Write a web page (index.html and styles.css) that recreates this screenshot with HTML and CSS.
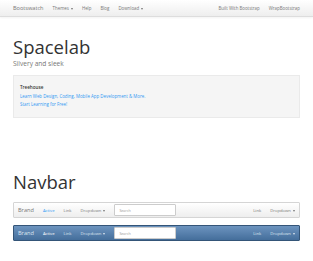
FILE: index.html
```html
<!DOCTYPE html>
<html lang="en">
<head>
    <meta charset="UTF-8">
    <meta name="viewport" content="width=device-width, initial-scale=1.0">
    <title>Bootswatch: Spacelab</title>
    <link rel="stylesheet" href="styles.css">
</head>
<body>
    <div class="topbar">
        <div class="topbar-inner">
            <a class="topbar-brand" href="#">Bootswatch</a>
            <a class="topbar-link" href="#">Themes <span class="caret"></span></a>
            <a class="topbar-link" href="#">Help</a>
            <a class="topbar-link" href="#">Blog</a>
            <a class="topbar-link" href="#">Download <span class="caret"></span></a>
            <span class="spacer"></span>
            <a class="topbar-link" href="#">Built With Bootstrap</a>
            <a class="topbar-link" href="#">WrapBootstrap</a>
        </div>
    </div>

    <div class="container">
        <div class="page-header">
            <h1>Spacelab</h1>
            <p class="lead">Silvery and sleek</p>
        </div>

        <div class="sponsor">
            <div class="sponsor-title">Treehouse</div>
            <a href="#">Learn Web Design, Coding, Mobile App Development &amp; More.</a>
            <a href="#">Start Learning for Free!</a>
        </div>

        <h1 class="section-title">Navbar</h1>

        <div class="navbar">
            <a class="brand" href="#">Brand</a>
            <a class="nav-link active" href="#">Active</a>
            <a class="nav-link" href="#">Link</a>
            <a class="nav-link" href="#">Dropdown <span class="caret"></span></a>
            <input class="search" type="text" placeholder="Search">
            <span class="spacer"></span>
            <a class="nav-link" href="#">Link</a>
            <a class="nav-link" href="#">Dropdown <span class="caret"></span></a>
        </div>

        <div class="navbar inverse">
            <a class="brand" href="#">Brand</a>
            <a class="nav-link active" href="#">Active</a>
            <a class="nav-link" href="#">Link</a>
            <a class="nav-link" href="#">Dropdown <span class="caret"></span></a>
            <input class="search" type="text" placeholder="Search">
            <span class="spacer"></span>
            <a class="nav-link" href="#">Link</a>
            <a class="nav-link" href="#">Dropdown <span class="caret"></span></a>
        </div>
    </div>
</body>
</html>
```

FILE: styles.css
```css
body {
    font-family: 'Open Sans', sans-serif;
    background-color: #fff;
    color: #2d2d2d;
    margin: 0;
}
a {
    text-decoration: none;
}
.spacer {
    flex: 1;
}
.caret {
    display: inline-block;
    width: 0;
    height: 0;
    vertical-align: middle;
    border-top: 2px solid;
    border-left: 1.5px solid transparent;
    border-right: 1.5px solid transparent;
    margin-left: 1px;
}
.topbar {
    height: 16px;
    background: linear-gradient(#fff, #eee);
    border-bottom: 1px solid #ddd;
    box-shadow: 0 1px 2px rgba(0, 0, 0, 0.05);
}
.topbar-inner {
    display: flex;
    align-items: center;
    height: 100%;
    padding: 0 13px;
}
.topbar-brand {
    color: #777;
    font-size: 5.6px;
    margin-right: 9px;
}
.topbar-link {
    color: #777;
    font-size: 4.4px;
    margin-right: 9px;
}
.topbar-link:last-child {
    margin-right: 0;
}
.container {
    padding: 0 13px;
}
.page-header h1 {
    font-size: 18.5px;
    font-weight: 400;
    color: #333;
    margin: 0;
    padding-top: 18px;
    line-height: 1.3;
}
.lead {
    font-size: 6.6px;
    color: #777;
    margin: 0;
}
.sponsor {
    margin-top: 7px;
    height: 43px;
    box-sizing: border-box;
    background-color: #f5f5f5;
    border: 1px solid #eaeaea;
    padding: 8px 6px;
    display: flex;
    flex-direction: column;
    gap: 2px;
}
.sponsor-title {
    font-size: 4.6px;
    font-weight: 600;
    color: #333;
    margin-bottom: 1px;
}
.sponsor a {
    font-size: 4.4px;
    color: #3399f3;
}
.section-title {
    font-size: 18.5px;
    font-weight: 400;
    color: #333;
    margin: 53px 0 9px;
    line-height: 1.2;
}
.navbar {
    display: flex;
    align-items: center;
    height: 16px;
    padding: 0 4px;
    box-sizing: border-box;
    background: linear-gradient(#fff, #eee);
    border: 1px solid #d5d5d5;
    border-radius: 1px;
    margin-bottom: 7px;
}
.brand {
    color: #777;
    font-size: 5.6px;
    margin-right: 9px;
}
.nav-link {
    color: #777;
    font-size: 4.2px;
    margin-right: 9px;
}
.nav-link:last-child {
    margin-right: 0;
}
.nav-link.active {
    color: #3399f3;
}
.search {
    width: 62px;
    height: 12px;
    box-sizing: border-box;
    border: 1px solid #ccc;
    border-radius: 1px;
    padding: 0 4px;
    font-family: 'Open Sans', sans-serif;
    font-size: 3.6px;
    background: #fff;
}
.search::placeholder {
    color: #999;
}
.navbar.inverse {
    background: linear-gradient(#6d94bf, #446e9b);
    border-color: #345578;
}
.navbar.inverse .brand,
.navbar.inverse .nav-link {
    color: #dde6f0;
}
.navbar.inverse .nav-link.active {
    color: #fff;
}
```
